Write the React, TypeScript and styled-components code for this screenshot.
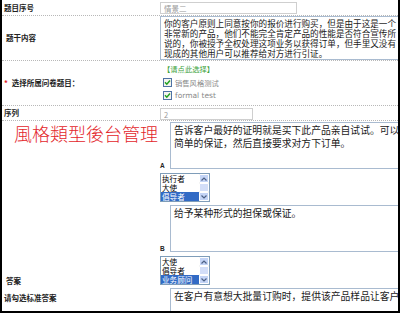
import React from "react";
import styled, { createGlobalStyle } from "styled-components";

const GlobalStyle = createGlobalStyle`
  html, body {
    margin: 0;
    padding: 0;
    background: #fff;
  }
  body {
    font-family: "Noto Sans CJK SC", "Noto Sans", sans-serif;
  }
`;

const CJK = `"Noto Sans CJK SC", "Noto Sans", sans-serif`;

const Page = styled.div`
  width: 400px;
  height: 313px;
  box-sizing: border-box;
  border: 2px solid #000;
  border-top: none;
  overflow: hidden;
  background: #fff;
`;

const Row = styled.div<{ $dotted?: boolean; $height?: number }>`
  display: grid;
  grid-template-columns: 158px 1fr;
  min-height: ${(p) => (p.$height ? `${p.$height}px` : "auto")};
  border-bottom: ${(p) => (p.$dotted ? "1px dotted #b8b8b8" : "none")};
`;

const Label = styled.div<{ $indent?: number }>`
  display: flex;
  align-items: center;
  padding-left: ${(p) => p.$indent ?? 2}px;
  font-size: 7.5px;
  font-weight: 700;
  line-height: 10px;
  color: #222;
`;

const Req = styled.span`
  color: #e02020;
  margin-right: 4px;
`;

const Cell = styled.div`
  min-width: 0;
  overflow: visible;
`;

const TextInput = styled.input<{ $width: number }>`
  display: block;
  box-sizing: border-box;
  width: ${(p) => p.$width}px;
  height: 12px;
  margin: 2px 0 0;
  padding: 0 3px;
  border: 1px solid #cfcfcf;
  font-family: ${CJK};
  font-size: 7.5px;
  color: #999;
  outline: none;
`;

const Memo = styled.textarea<{ $height: number; $size: number; $lh: number }>`
  display: block;
  box-sizing: border-box;
  width: 240px;
  height: ${(p) => p.$height}px;
  margin: 0;
  padding: 1px 3px 0;
  border: 1px solid #a9bbd0;
  font-family: ${CJK};
  font-size: ${(p) => p.$size}px;
  line-height: ${(p) => p.$lh}px;
  color: #1a1a1a;
  background: #fff;
  resize: none;
  overflow: hidden;
  outline: none;
  white-space: pre;
`;

const Picker = styled.div`
  display: flex;
  flex-direction: column;
  padding: 2px 0 3px 3px;
`;

const PickLink = styled.div`
  height: 13px;
  line-height: 13px;
  font-size: 7.3px;
  color: #3aa23a;
`;

const CheckLine = styled.label`
  display: flex;
  align-items: center;
  gap: 3px;
  height: 13px;
  font-size: 7.3px;
  color: #8a8a8a;
`;

const Latin = styled.span`
  font-family: "DejaVu Sans", sans-serif;
  font-size: 7.5px;
`;

const Title = styled.div`
  padding: 2px 0 0 12px;
  font-family: "Noto Sans CJK TC", sans-serif;
  font-weight: 300;
  font-size: 18px;
  line-height: 20px;
  color: #e3262b;
  white-space: nowrap;
`;

const SideColumn = styled.div`
  display: flex;
  flex-direction: column;
  justify-content: space-between;
`;

const SideLabel = styled.div<{ $indent: number; $top?: number; $bottom?: number }>`
  padding: ${(p) => p.$top ?? 0}px 0 ${(p) => p.$bottom ?? 0}px ${(p) => p.$indent}px;
  font-size: 7.5px;
  font-weight: 700;
  line-height: 10px;
  color: #222;
`;

const Options = styled.div`
  display: flex;
  flex-direction: column;
  padding-bottom: 2px;
`;

const OptionLine = styled.div<{ $top: number }>`
  display: flex;
  align-items: flex-end;
  margin-top: ${(p) => p.$top}px;
`;

const Letter = styled.span`
  width: 10px;
  flex: none;
  font-family: "Liberation Sans", sans-serif;
  font-size: 6.5px;
  font-weight: 700;
  line-height: 7px;
  color: #222;
`;

const ListBox = styled.div`
  display: flex;
  width: 50px;
  height: 29px;
  margin-top: 4px;
  box-sizing: border-box;
  border: 1px solid #7f9db9;
  background: #fff;
`;

const ListItems = styled.div`
  flex: 1;
  display: flex;
  flex-direction: column;
  overflow: hidden;
`;

const ListItem = styled.div<{ $selected?: boolean }>`
  height: 9px;
  line-height: 9px;
  padding-left: 1px;
  font-size: 7.6px;
  white-space: nowrap;
  overflow: hidden;
  color: ${(p) => (p.$selected ? "#fff" : "#000")};
  background: ${(p) => (p.$selected ? "#316ac5" : "transparent")};
`;

const ScrollBar = styled.div`
  width: 10px;
  display: flex;
  flex-direction: column;
  background: #f1f0ea;
`;

const ScrollPart = styled.div<{ $thumb?: boolean }>`
  flex: 1;
  display: flex;
  align-items: center;
  justify-content: center;
  box-sizing: border-box;
  border: 1px solid #fff;
  border-radius: 1px;
  background: ${(p) => (p.$thumb ? "#d3def8" : "#c4d4f6")};
`;

const CheckBox = () => (
  <svg width="9" height="9" viewBox="0 0 9 9">
    <rect x="0.5" y="0.5" width="8" height="8" fill="#f4f4f0" stroke="#4f72a4" />
    <path d="M2 4.3 L3.8 6.2 L7 2.6" fill="none" stroke="#21a121" strokeWidth="1.5" />
  </svg>
);

const Arrow = ({ up }: { up?: boolean }) => (
  <svg width="6" height="4" viewBox="0 0 6 4">
    <path
      d={up ? "M0.5 3.5 L3 1 L5.5 3.5" : "M0.5 0.5 L3 3 L5.5 0.5"}
      fill="none"
      stroke="#4d6185"
      strokeWidth="1.2"
    />
  </svg>
);

const RoleList = ({ items, selected }: { items: string[]; selected: number }) => (
  <ListBox>
    <ListItems>
      {items.map((it, i) => (
        <ListItem key={it} $selected={i === selected}>
          {it}
        </ListItem>
      ))}
    </ListItems>
    <ScrollBar>
      <ScrollPart>
        <Arrow up />
      </ScrollPart>
      <ScrollPart $thumb />
      <ScrollPart>
        <Arrow />
      </ScrollPart>
    </ScrollBar>
  </ListBox>
);

const stem =
  "你的客户原则上同意按你的报价进行购买，但是由于这是一个\n非常新的产品，他们不能完全肯定产品的性能是否符合宣传所\n说的，你被授予全权处理这项业务以获得订单，但手里又没有\n现成的其他用户可以推荐给对方进行引证。";

const App = () => {
  return (
    <Page>
      <GlobalStyle />
      <Row $dotted $height={15}>
        <Label>题目序号</Label>
        <Cell>
          <TextInput $width={137} readOnly value="情景二" />
        </Cell>
      </Row>
      <Row $dotted>
        <Label $indent={4}>题干内容</Label>
        <Cell>
          <Memo $height={44} $size={8.6} $lh={10} readOnly value={stem} />
        </Cell>
      </Row>
      <Row $dotted>
        <Label>
          <Req>*</Req>选择所属问卷题目：
        </Label>
        <Picker>
          <PickLink>【请点此选择】</PickLink>
          <CheckLine>
            <CheckBox />
            销售风格测试
          </CheckLine>
          <CheckLine>
            <CheckBox />
            <Latin>formal test</Latin>
          </CheckLine>
        </Picker>
      </Row>
      <Row $dotted $height={13}>
        <Label>序列</Label>
        <Cell>
          <TextInput $width={93} readOnly value="2" />
        </Cell>
      </Row>
      <Row>
        <SideColumn>
          <Title>風格類型後台管理</Title>
          <SideLabel $indent={4} $bottom={1}>
            答案
          </SideLabel>
        </SideColumn>
        <Options>
          <OptionLine $top={1}>
            <Letter>A</Letter>
            <Memo
              $height={47}
              $size={9.8}
              $lh={13}
              readOnly
              value={"告诉客户最好的证明就是买下此产品亲自试试。可以\n简单的保证，然后直接要求对方下订单。"}
            />
          </OptionLine>
          <RoleList items={["执行者", "大使", "倡导者"]} selected={2} />
          <OptionLine $top={3}>
            <Letter>B</Letter>
            <Memo $height={47} $size={9.8} $lh={13} readOnly value="给予某种形式的担保或保证。" />
          </OptionLine>
          <RoleList items={["大使", "倡导者", "业务顾问"]} selected={2} />
        </Options>
      </Row>
      <Row>
        <SideColumn>
          <SideLabel $indent={2} $top={6}>
            请勾选标准答案
          </SideLabel>
        </SideColumn>
        <Options>
          <OptionLine $top={1}>
            <Letter />
            <Memo
              $height={47}
              $size={9.8}
              $lh={13}
              readOnly
              value="在客户有意想大批量订购时，提供该产品样品让客户"
            />
          </OptionLine>
        </Options>
      </Row>
    </Page>
  );
};

export default App;
